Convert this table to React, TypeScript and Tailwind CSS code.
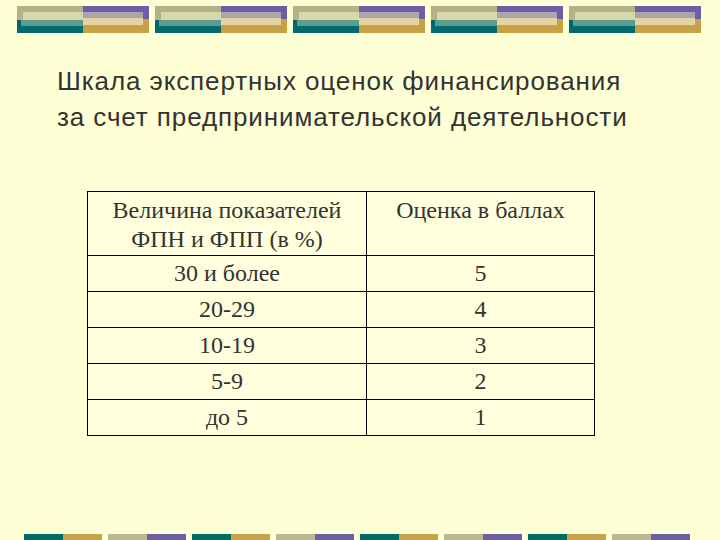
import React from 'react';

const rows = [
  { range: '30 и более', score: '5' },
  { range: '20-29', score: '4' },
  { range: '10-19', score: '3' },
  { range: '5-9', score: '2' },
  { range: 'до 5', score: '1' },
];

// Верхняя декоративная плашка: левая половина (олива/бирюза), правая (фиолет/золото)
const TopTile = () => (
  <div className="flex w-[132px] h-[27px]">
    <div className="flex flex-col w-[66px]">
      <div className="h-[6px] bg-[#b4b286]" />
      <div className="h-[8px] flex">
        <div className="w-[6px] bg-[#b4b286]" />
        <div className="flex-1 bg-[#d9d8ac]" />
      </div>
      <div className="h-[6px] flex">
        <div className="w-[4px] bg-[#00666b]" />
        <div className="flex-1 bg-[#5b9d8f]" />
      </div>
      <div className="h-[7px] bg-[#006a6f]" />
    </div>
    <div className="flex w-[66px]">
      <div className="flex flex-col flex-1">
        <div className="h-[6px] bg-[#6b5da6]" />
        <div className="h-[6px] bg-[#a9a5ad]" />
        <div className="h-[7px] bg-[#e3d4a2]" />
        <div className="h-[8px] bg-[#c8a144]" />
      </div>
      <div className="flex flex-col w-[6px]">
        <div className="h-[13px] bg-[#6b5da6]" />
        <div className="flex-1 bg-[#c8a144]" />
      </div>
    </div>
  </div>
);

const BottomPair = ({ kind }: { kind: 'a' | 'b' }) => (
  <div className="flex w-[78px] h-[6px]">
    <div className={kind === 'a' ? 'w-[39px] bg-[#006a62]' : 'w-[39px] bg-[#b8b891]'} />
    <div className={kind === 'a' ? 'w-[39px] bg-[#c9a148]' : 'w-[39px] bg-[#6a60a2]'} />
  </div>
);

const App = () => {
  return (
    <div className="w-[720px] h-[540px] bg-[#ffffd6] flex flex-col overflow-hidden">
      <div className="flex gap-[6px] pt-[6px] pl-[17px]">
        {[0, 1, 2, 3, 4].map((i) => (
          <TopTile key={i} />
        ))}
      </div>

      <h1
        className="mt-[30px] ml-[57px] text-[26px] leading-[36px] tracking-[0.9px] font-normal text-[#333333]"
        style={{ fontFamily: '"Liberation Sans", Arial, sans-serif' }}
      >
        Шкала экспертных оценок финансирования
        <br />
        за счет предпринимательской деятельности
      </h1>

      <div
        className="mt-[56px] ml-[87px] w-[508px] border border-black bg-[#ffffdd] text-[24px] leading-[29px] text-[#333333]"
        style={{ fontFamily: '"Liberation Serif", "Times New Roman", serif' }}
      >
        <div className="flex h-[63px]">
          <div className="w-[278px] pt-[4px] text-center">
            Величина показателей
            <br />
            ФПН и ФПП (в %)
          </div>
          <div className="flex-1 border-l border-black pt-[4px] text-center">Оценка в баллах</div>
        </div>
        {rows.map((r) => (
          <div key={r.score} className="flex h-[36px] border-t border-black">
            <div className="w-[278px] flex items-center justify-center">{r.range}</div>
            <div className="flex-1 border-l border-black flex items-center justify-center">{r.score}</div>
          </div>
        ))}
      </div>

      <div className="mt-auto flex gap-[6px] pl-[24px]">
        {['a', 'b', 'a', 'b', 'a', 'b', 'a', 'b'].map((k, i) => (
          <BottomPair key={i} kind={k as 'a' | 'b'} />
        ))}
      </div>
    </div>
  );
};

export default App;
